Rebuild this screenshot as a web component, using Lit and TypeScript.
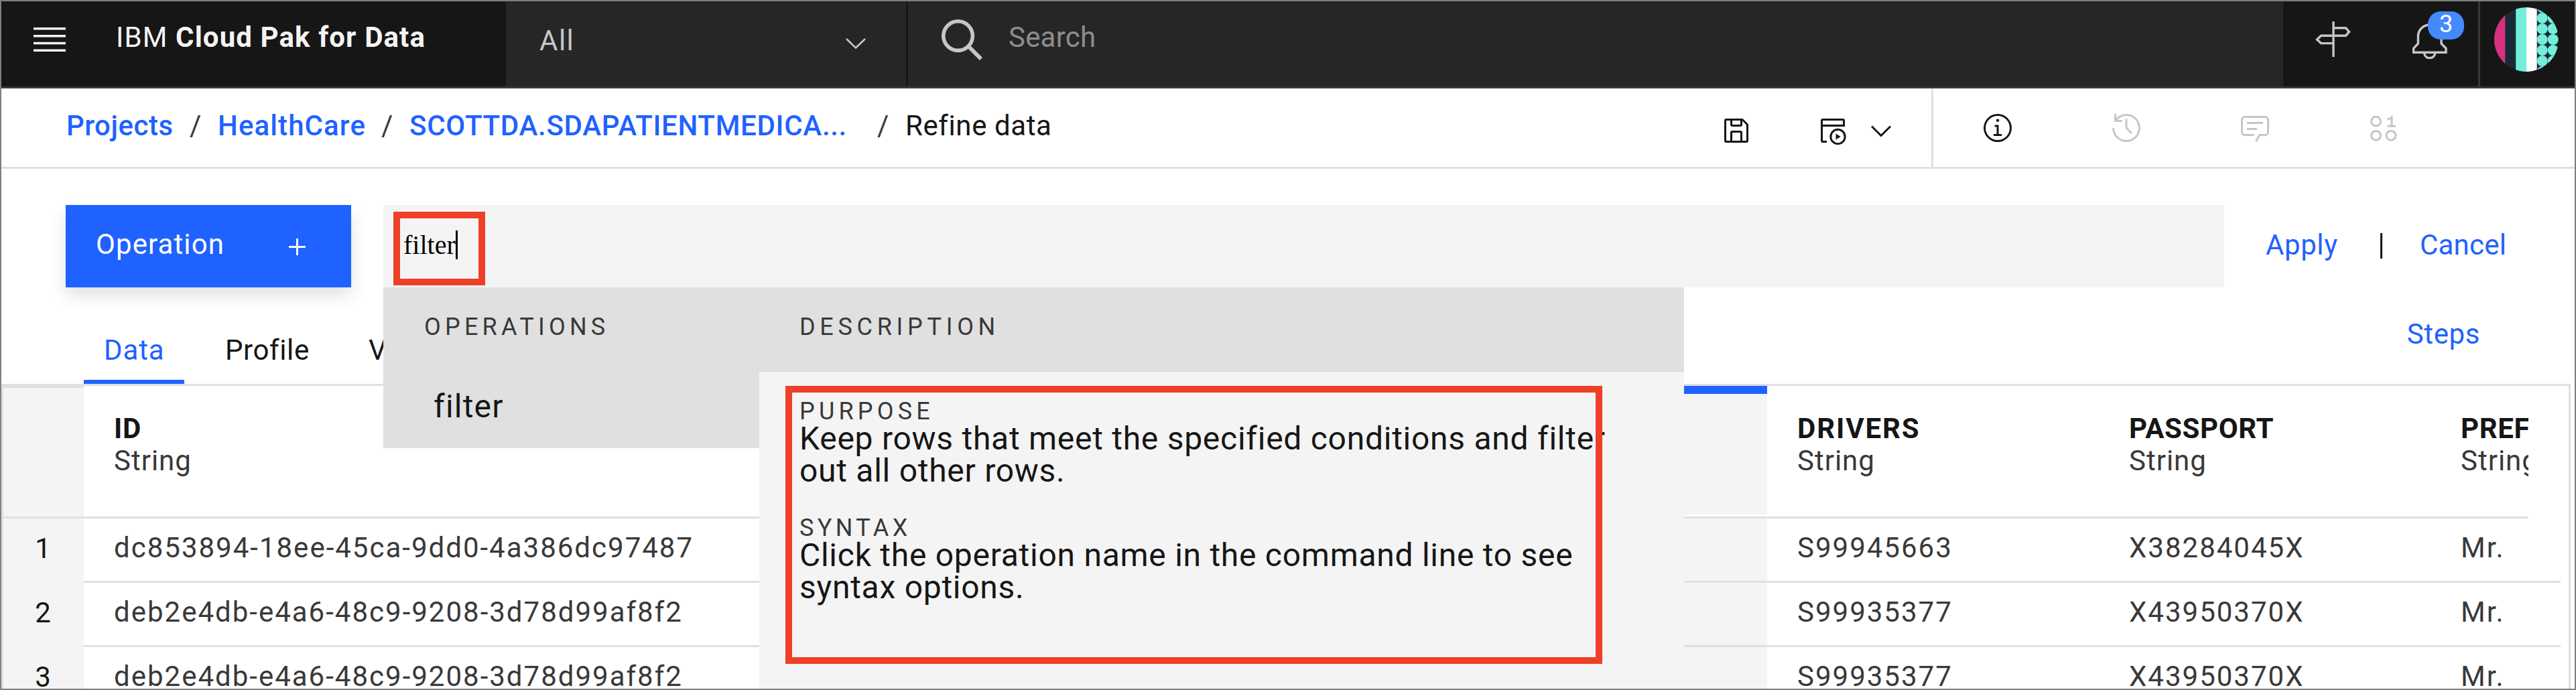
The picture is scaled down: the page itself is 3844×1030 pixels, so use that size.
import { LitElement, html, css, svg } from "lit";
import { customElement } from "lit/decorators.js";

interface Column {
  name: string;
  type: string;
  track: string;
}

interface Row {
  id: string;
  drivers: string;
  passport: string;
  prefix: string;
}

const COLUMNS: Column[] = [
  { name: "DRIVERS", type: "String", track: "wide" },
  { name: "PASSPORT", type: "String", track: "" },
  { name: "PREFIX", type: "String", track: "" },
];

const ROWS: Row[] = [
  { id: "dc853894-18ee-45ca-9dd0-4a386dc97487", drivers: "S99945663", passport: "X38284045X", prefix: "Mr." },
  { id: "deb2e4db-e4a6-48c9-9208-3d78d99af8f2", drivers: "S99935377", passport: "X43950370X", prefix: "Mr." },
  { id: "deb2e4db-e4a6-48c9-9208-3d78d99af8f2", drivers: "S99935377", passport: "X43950370X", prefix: "Mr." },
];

@customElement("app-header")
export class AppHeader extends LitElement {
  static styles = css`
    :host {
      display: flex;
      height: 127px;
      background: #161616;
      border-bottom: 3px solid #393939;
      font-family: Roboto, "Liberation Sans", sans-serif;
      font-size: 42px;
      line-height: 42px;
      flex: none;
    }
    svg { display: block; flex: none; }
    .brand { display: flex; width: 753px; color: #f4f4f4; }
    .burger { margin: 39px 0 0 48px; }
    .name { margin: 33px 0 0 75px; letter-spacing: 1.1px; white-space: nowrap; }
    .scope {
      display: flex;
      justify-content: space-between;
      box-sizing: border-box;
      width: 600px;
      padding: 38px 59px 0 50px;
      background: #262626;
      border-right: 3px solid #161616;
      color: #c6c6c6;
      letter-spacing: 1.5px;
    }
    .scope svg { margin-top: 16px; }
    .search { display: flex; flex: 1; background: #262626; color: #8d8d8d; }
    .search svg { margin: 27px 0 0 50px; }
    .hint { margin: 33px 0 0 38px; letter-spacing: 0.2px; }
    .tools { display: flex; width: 291px; position: relative; }
    .guide { margin: 30px 0 0 48px; }
    .bell { margin: 32px 0 0 89px; }
    .badge {
      position: absolute;
      left: 216px;
      top: 15px;
      width: 54px;
      height: 42px;
      border-radius: 19px;
      background: #4589ff;
      color: #fff;
      font-size: 36px;
      text-align: center;
      line-height: 38px;
    }
    .user { width: 141px; border-left: 3px solid #393939; }
    .user svg { margin: 9px 0 0 21px; }
  `;

  render() {
    const dots = [0, 1, 2, 3, 4, 5, 6].flatMap((r) =>
      [0, 1].map((c) => svg`<circle cx=${71.7 + c * 16} cy=${r * 16} r="8" fill="#73eedb"/>`),
    );
    return html`
      <div class="brand">
        <svg class="burger" width="48" height="36" viewBox="0 0 48 36" fill="#f4f4f4">
          <path d="M0 0h48v3.6H0zM0 11h48v3.4H0zM0 21.8h48v3.4H0zM0 32.4h48V36H0z" />
        </svg>
        <span class="name">IBM <b>Cloud Pak for Data</b></span>
      </div>
      <div class="scope">
        <span>All</span>
        <svg width="32" height="18" viewBox="0 0 32 18" fill="none" stroke="#c6c6c6" stroke-width="2.6">
          <path d="M2 2l14 13.5L30 2" />
        </svg>
      </div>
      <div class="search">
        <svg width="62" height="62" viewBox="0 0 62 62" fill="none" stroke="#c6c6c6" stroke-width="5.6">
          <circle cx="24.6" cy="24.6" r="21.8" />
          <path d="M40 40l19 19" stroke-width="6" />
        </svg>
        <span class="hint">Search</span>
      </div>
      <div class="tools">
        <svg class="guide" width="54" height="54" viewBox="0 0 54 54" fill="none" stroke="#c6c6c6" stroke-width="3.4">
          <path d="M27 0v53M27 9.8h18.5l5 5.6-5 5.8h-37l-6 5.8 6 5.6H27" />
        </svg>
        <svg class="bell" width="54" height="54" viewBox="0 0 54 54" fill="none" stroke="#c6c6c6" stroke-width="3.4">
          <path d="M28 3c-10 0-17.600 7.600-17.600 17.500V31L3.600 38.200v6H52v-6L45 31V20.500C45 10.600 38 3 28 3zM19.500 44c0 5 3.200 8.600 8 8.600s8.500-3.600 8.500-8.600" />
        </svg>
        <span class="badge">3</span>
      </div>
      <div class="user">
        <svg width="96" height="96" viewBox="0 0 96 96">
          <clipPath id="disc"><circle cx="48" cy="48" r="48" /></clipPath>
          <g clip-path="url(#disc)">
            <rect width="96" height="96" fill="#172b36" />
            <rect width="16.300" height="96" fill="#d9307f" />
            <rect x="32.200" width="16" height="96" fill="#73eedb" />
            <rect x="48" width="15.700" height="96" fill="#fdfefe" />
            ${dots}
          </g>
        </svg>
      </div>
    `;
  }
}

@customElement("app-toolbar")
export class AppToolbar extends LitElement {
  static styles = css`
    :host {
      display: flex;
      height: 117px;
      background: #fff;
      border-bottom: 3px solid #e0e0e0;
      font-family: Roboto, "Liberation Sans", sans-serif;
      font-size: 42px;
      line-height: 42px;
      color: #161616;
      flex: none;
    }
    svg { display: block; flex: none; }
    .crumbs { display: flex; box-sizing: border-box; width: 2565px; padding: 35px 0 0 97px; white-space: nowrap; }
    .link { color: #1f62ff; font-weight: 500; }
    .projects { width: 184px; letter-spacing: 0.5px; }
    .project { width: 244px; letter-spacing: 1.1px; }
    .asset { width: 698px; letter-spacing: 0.7px; }
    .slash { width: 42px; color: #393939; }
    .current { letter-spacing: 0.6px; }
    .actions { display: flex; width: 315px; border-right: 3px solid #e0e0e0; }
    .save { margin-top: 39px; }
    .run { margin: 39px 0 0 96px; }
    .caret { margin: 54px 0 0 32px; }
    .panels { display: flex; padding: 35px 0 0 72px; gap: 144px; }
    .off { color: #c6c6c6; }
  `;

  render() {
    return html`
      <div class="crumbs">
        <span class="link projects">Projects</span><span class="slash">/</span>
        <span class="link project">HealthCare</span><span class="slash">/</span>
        <span class="link asset">SCOTTDA.SDAPATIENTMEDICA...</span><span class="slash">/</span>
        <span class="current">Refine data</span>
      </div>
      <div class="actions">
        <svg class="save" width="48" height="48" viewBox="0 0 32 32" fill="currentColor">
          <path d="M27.71,9.29l-5-5A1,1,0,0,0,22,4H6A2,2,0,0,0,4,6V26a2,2,0,0,0,2,2H26a2,2,0,0,0,2-2V10A1,1,0,0,0,27.710,9.290ZM12,6h8v4H12Zm8,20H12V18h8Zm2,0V18a2,2,0,0,0-2-2H12a2,2,0,0,0-2,2v8H6V6h4v4a2,2,0,0,0,2,2h8a2,2,0,0,0,2-2V6.410l4,4V26Z" />
        </svg>
        <svg class="run" width="48" height="48" viewBox="0 0 32 32" fill="none" stroke="currentColor" stroke-width="2">
          <path d="M10 27H6a1 1 0 0 1-1-1V6a1 1 0 0 1 1-1h20a1 1 0 0 1 1 1v5H5" />
          <circle cx="21" cy="22" r="7.100" />
          <path d="M19 19v6l4.800-3z" fill="currentColor" stroke="none" />
        </svg>
        <svg class="caret" width="32" height="20" viewBox="0 0 32 20" fill="none" stroke="currentColor" stroke-width="3">
          <path d="M2 2.500l14 14 14-14" />
        </svg>
      </div>
      <div class="panels">
        <svg width="48" height="48" viewBox="0 0 32 32" fill="currentColor">
          <path d="M17 22v-9h-4v2h2v7h-3v2h8v-2zM16 7a1.500 1.500 0 1 0 1.500 1.500A1.500 1.500 0 0 0 16 7z" />
          <path d="M16 30a14 14 0 1 1 14-14 14 14 0 0 1-14 14zm0-26a12 12 0 1 0 12 12A12 12 0 0 0 16 4z" />
        </svg>
        <svg class="off" width="48" height="48" viewBox="0 0 32 32" fill="currentColor">
          <path d="M20.590 22 15 16.410 15 7 17 7 17 15.580 22 20.590z" />
          <path d="M16,2A13.940,13.940,0,0,0,6,6.230V2H4v8h8V8H7.080A12,12,0,1,1,4,16H2A14,14,0,1,0,16,2Z" />
        </svg>
        <svg class="off" width="48" height="48" viewBox="0 0 32 32" fill="currentColor">
          <path d="M17.740,30,16,29l4-7h6a2,2,0,0,0,2-2V8a2,2,0,0,0-2-2H6A2,2,0,0,0,4,8V20a2,2,0,0,0,2,2h9v2H6a4,4,0,0,1-4-4V8A4,4,0,0,1,6,4H26a4,4,0,0,1,4,4V20a4,4,0,0,1-4,4H21.160Z" />
          <path d="M8 10H24V12H8zM8 16H18V18H8z" />
        </svg>
        <svg class="off" width="48" height="48" viewBox="0 0 48 48" fill="none" stroke="currentColor" stroke-width="3">
          <ellipse cx="12.500" cy="14.200" rx="7" ry="6.900" />
          <ellipse cx="12.500" cy="35.300" rx="7" ry="6.900" />
          <ellipse cx="35" cy="35.300" rx="7" ry="6.900" />
          <path d="M29.400 10.300H36M36 5.700V21M29.400 21.200H42" />
        </svg>
      </div>
    `;
  }
}

@customElement("data-grid")
export class DataGrid extends LitElement {
  static styles = css`
    :host {
      display: block;
      flex: 1;
      width: 3834px;
      box-sizing: border-box;
      border: 3px solid #e0e0e0;
      border-bottom: 0;
      font-family: Roboto, "Liberation Sans", sans-serif;
      font-size: 42px;
      line-height: 42px;
      color: #393939;
      white-space: nowrap;
    }
    .line { display: grid; grid-template-columns: 120px 2017px 495px 495px 495px 1fr; box-sizing: border-box; overflow: hidden; }
    .head { height: 198px; width: 3768px; line-height: 48px; }
    .row { height: 96px; width: 3816px; }
    .cell { box-sizing: border-box; border-bottom: 3px solid #e0e0e0; padding: 23px 0 0 45px; letter-spacing: 2px; min-width: 0; overflow: hidden; }
    .head .cell { padding-top: 40px; letter-spacing: 1px; }
    .title { color: #161616; font-weight: 700; letter-spacing: 0.6px; }
    .wide { letter-spacing: 1.900px; }
    .cell.gutter { background: #f4f4f4; color: #161616; text-align: center; padding: 24px 0 0; border-bottom: 0; }
    .head .cell.gutter { border-top: 3px solid #e0e0e0; border-bottom: 3px solid #e0e0e0; }
    .picked { background: #f4f4f4; padding: 0; }
    .head .picked { border-top: 12px solid #1f62ff; box-shadow: inset 0 -3px #fff; }
  `;

  render() {
    return html`
      <div class="line head">
        <div class="cell gutter"></div>
        <div class="cell"><div class="title">ID</div><div>String</div></div>
        <div class="cell picked"></div>
        ${COLUMNS.map((c) => html`<div class="cell"><div class="title ${c.track}">${c.name}</div><div>${c.type}</div></div>`)}
      </div>
      ${ROWS.map(
        (r, i) => html`
          <div class="line row">
            <div class="cell gutter">${i + 1}</div>
            <div class="cell">${r.id}</div>
            <div class="cell picked"></div>
            <div class="cell">${r.drivers}</div>
            <div class="cell">${r.passport}</div>
            <div class="cell">${r.prefix}</div>
          </div>
        `,
      )}
    `;
  }
}

@customElement("command-suggestions")
export class CommandSuggestions extends LitElement {
  static styles = css`
    :host {
      display: grid;
      grid-template-columns: 561px 1380px;
      grid-template-rows: 126px 114px 1fr;
      font-family: Roboto, "Liberation Sans", sans-serif;
      color: #161616;
    }
    .head { background: #e0e0e0; padding-top: 41px; }
    .caps { color: #393939; font-size: 36px; line-height: 36px; letter-spacing: 6.200px; }
    .ops { padding-left: 61px; }
    .desc { padding-left: 60px; letter-spacing: 6.700px; }
    .item { background: #e0e0e0; font-size: 48px; line-height: 48px; padding: 28px 0 0 75px; letter-spacing: 1.200px; }
    .detail { grid-row: 2 / 4; grid-column: 2; background: #f4f4f4; padding: 41px 0 0 60px; }
    .text { font-size: 48px; line-height: 48px; letter-spacing: 0.730px; white-space: nowrap; margin: -1px 0 43px; }
    .syntax { letter-spacing: 5.400px; }
  `;

  render() {
    return html`
      <div class="head caps ops">OPERATIONS</div>
      <div class="head caps desc">DESCRIPTION</div>
      <div class="item">filter</div>
      <div class="detail">
        <div class="caps">PURPOSE</div>
        <div class="text">Keep rows that meet the specified conditions and filter<br />out all other rows.</div>
        <div class="caps syntax">SYNTAX</div>
        <div class="text">Click the operation name in the command line to see<br />syntax options.</div>
      </div>
    `;
  }
}

@customElement("app-root")
export class AppRoot extends LitElement {
  static styles = css`
    :host { display: block; }
    .frame {
      position: relative;
      display: flex;
      flex-direction: column;
      box-sizing: border-box;
      width: 3844px;
      height: 1030px;
      border: 2px solid #7f7f7f;
      background: #fff;
      overflow: hidden;
      font-family: Roboto, "Liberation Sans", sans-serif;
      font-size: 42px;
      line-height: 42px;
      color: #161616;
    }
    .command { display: flex; flex: none; height: 123px; margin-top: 54px; }
    .operation {
      display: flex;
      justify-content: space-between;
      box-sizing: border-box;
      width: 426px;
      height: 123px;
      margin-left: 96px;
      padding: 38px 68px 0 45px;
      background: #1f62ff;
      color: #fff;
      letter-spacing: 1.100px;
      box-shadow: 0 12px 24px rgba(0, 0, 0, 0.12);
    }
    .operation svg { margin-top: 12px; }
    .input {
      display: flex;
      width: 2747px;
      margin-left: 48px;
      background: #f4f4f4;
      color: #000;
      font-family: "Liberation Serif", "Times New Roman", serif;
      font-size: 40px;
      line-height: 43px;
    }
    .typed { display: flex; height: 43px; margin: 38px 0 0 30px; border-right: 3px solid #000; }
    .links { display: flex; padding-top: 39px; color: #1f62ff; }
    .apply { width: 171px; margin-left: 62px; letter-spacing: 0.600px; }
    .bar { width: 3px; height: 38px; margin-top: 3px; background: #161616; }
    .cancel { margin-left: 56px; letter-spacing: 0.200px; }
    .tabs { display: flex; flex: none; height: 144px; box-sizing: border-box; padding-left: 123px; white-space: nowrap; }
    .tab { box-sizing: border-box; height: 144px; padding: 73px 30px 0; letter-spacing: 0.600px; }
    .active { width: 150px; color: #1f62ff; border-bottom: 6px solid #1f62ff; letter-spacing: 0.900px; }
    .profile { width: 214px; margin-left: 31px; }
    .steps { margin: 49px 141px 0 auto; color: #1f62ff; letter-spacing: 0.600px; }
    .menu { position: absolute; left: 570px; top: 427px; height: 599px; }
    .mark { position: absolute; box-sizing: border-box; border: 10px solid #ee4026; }
    .mark-input { left: 585px; top: 314px; width: 137px; height: 110px; }
    .mark-detail { left: 1170px; top: 574px; width: 1219px; height: 415px; }
  `;

  render() {
    return html`
      <div class="frame">
        <app-header></app-header>
        <app-toolbar></app-toolbar>
        <div class="command">
          <div class="operation">
            <span>Operation</span>
            <svg width="25" height="25" viewBox="0 0 25 25" fill="#fff"><path d="M11 0h3v11h11v3H14v11h-3V14H0v-3h11z" /></svg>
          </div>
          <div class="input"><span class="typed">filter</span></div>
          <div class="links"><span class="apply">Apply</span><span class="bar"></span><span class="cancel">Cancel</span></div>
        </div>
        <div class="tabs">
          <div class="tab active">Data</div>
          <div class="tab profile">Profile</div>
          <div class="tab">V</div>
          <div class="steps">Steps</div>
        </div>
        <data-grid></data-grid>
        <command-suggestions class="menu"></command-suggestions>
        <div class="mark mark-input"></div>
        <div class="mark mark-detail"></div>
      </div>
    `;
  }
}
